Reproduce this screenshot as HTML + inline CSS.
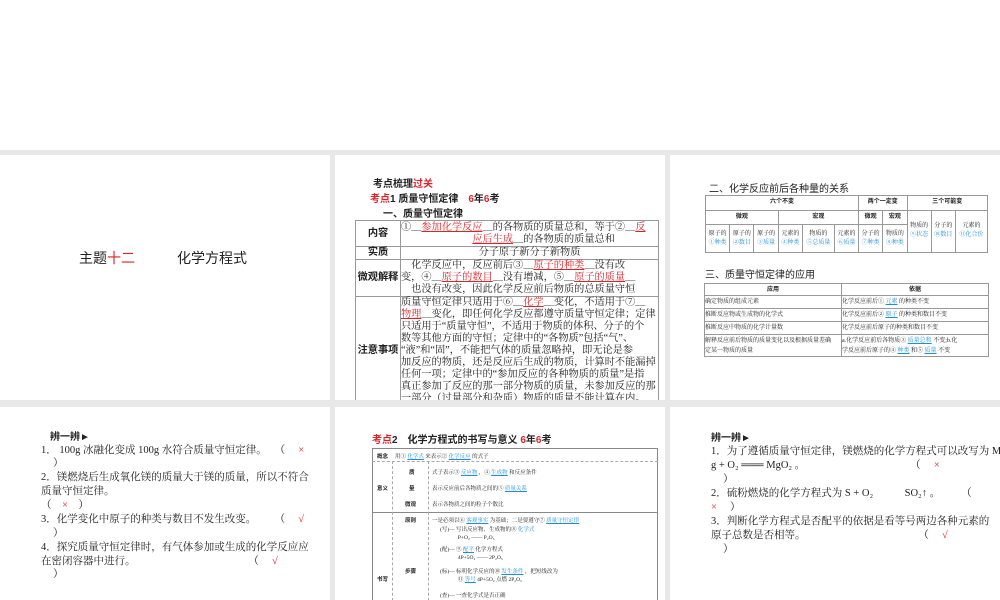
<!DOCTYPE html>
<html><head><meta charset="utf-8"><style>
*{margin:0;padding:0;box-sizing:border-box}
body{width:1000px;height:600px;background:#fff;position:relative;overflow:hidden;font-family:"Liberation Serif","Noto Serif CJK SC",serif;color:#222}
.bg{position:absolute;left:0;top:150px;width:1000px;height:450px;background:#e8e8e8}
.p{position:absolute;background:#fff;overflow:hidden}
.a{position:absolute;white-space:nowrap}
.r{color:#d9252a}.b{color:#1d8fd8}
.s{font-family:"Liberation Sans","Noto Sans CJK SC",sans-serif;font-weight:bold}
table{border-collapse:collapse;position:absolute}
td{border:1px solid #999;text-align:center;vertical-align:middle;white-space:nowrap;padding:0}
u{text-decoration:underline}
.t2 td{font-size:10.2px;line-height:12px;letter-spacing:0}
</style></head><body>
<div class="bg"></div>
<!-- panel 1 -->
<div class="p" style="left:0;top:155px;width:330px;height:245px">
<div class="a s" style="left:79px;top:93px;font-size:14px;font-weight:normal">主题<span class="r">十二</span>　　　化学方程式</div>
</div>
<!-- panel 2 -->
<div class="p" style="left:335px;top:155px;width:330px;height:245px;font-size:10.5px">
<div class="a s" style="left:38px;top:20px;font-size:10px">考点梳理<span class="r">过关</span></div>
<div class="a s" style="left:35px;top:35px;font-size:10px"><span class="r">考点</span>1 质量守恒定律　<span class="r">6</span>年<span class="r">6</span>考</div>
<div class="a s" style="left:48px;top:50px;font-size:10px">一、质量守恒定律</div>
<table class="t2" style="left:20px;top:65px;width:304px">
<tr><td class="s" style="width:45px;height:26px">内容</td><td style="text-align:left">①＿<u class="r">参加化学反应</u>＿的各物质的质量总和，等于②＿<u class="r">反</u><br>　　　　　　　<u class="r">应后生成</u>＿的各物质的质量总和</td></tr>
<tr><td class="s" style="height:12px">实质</td><td>分子原子新分子新物质</td></tr>
<tr><td class="s">微观解释</td><td style="text-align:left;height:37px">　化学反应中，反应前后③＿<u class="r">原子的种类</u>＿没有改<br>变，④＿<u class="r">原子的数目</u>＿没有增减，⑤＿<u class="r">原子的质量</u>＿<br>　也没有改变，因此化学反应前后物质的总质量守恒</td></tr>
<tr><td class="s">注意事项</td><td style="text-align:left">质量守恒定律只适用于⑥＿<u class="r">化学</u>＿变化，不适用于⑦＿<br><u class="r">物理</u>＿变化，即任何化学反应都遵守质量守恒定律；定律<br>只适用于“质量守恒”，不适用于物质的体积、分子的个<br>数等其他方面的守恒；定律中的“各物质”包括“气”、<br>“液”和“固”，不能把气体的质量忽略掉，即无论是参<br>加反应的物质，还是反应后生成的物质，计算时不能漏掉<br>任何一项；定律中的“参加反应的各种物质的质量”是指<br>真正参加了反应的那一部分物质的质量，未参加反应的那<br>一部分（过量部分和杂质）物质的质量不能计算在内。</td></tr>
</table>
</div>
<!-- panel 3 -->
<div class="p" style="left:670px;top:155px;width:330px;height:245px;font-size:6px">
<div class="a s" style="left:39px;top:25px;font-size:10px;font-weight:normal">二、化学反应前后各种量的关系</div>
<table style="left:35px;top:40px;width:283px;height:58px;line-height:9px">
<tr><td colspan="6" class="s">六个不变</td><td colspan="2" class="s">两个一定变</td><td colspan="3" class="s">三个可能变</td></tr>
<tr><td colspan="3" class="s">微观</td><td colspan="3" class="s">宏观</td><td class="s">微观</td><td class="s">宏观</td><td rowspan="2">物质的<br><span class="b">⑨状态</span></td><td rowspan="2">分子的<br><span class="b">⑩数目</span></td><td rowspan="2">元素的<br><span class="b">⑪化合价</span></td></tr>
<tr><td>原子的<br><span class="b">①种类</span></td><td>原子的<br><span class="b">②数目</span></td><td>原子的<br><span class="b">③质量</span></td><td>元素的<br><span class="b">④种类</span></td><td>物质的<br><span class="b">⑤总质量</span></td><td>元素的<br><span class="b">⑥质量</span></td><td>分子的<br><span class="b">⑦种类</span></td><td>物质的<br><span class="b">⑧种类</span></td></tr>
</table>
<div class="a s" style="left:35px;top:111px;font-size:10px;font-weight:normal">三、质量守恒定律的应用</div>
<table style="left:34px;top:128px;width:285px;line-height:10px">
<tr><td class="s" style="height:12px;width:137px">应用</td><td class="s">依据</td></tr>
<tr><td style="text-align:left;height:13px">确定物质的组成元素</td><td style="text-align:left">化学反应前后① <u class="b">元素</u> 的种类不变</td></tr>
<tr><td style="text-align:left;height:13px">推断反应物或生成物的化学式</td><td style="text-align:left">化学反应前后② <u class="b">原子</u> 的种类和数目不变</td></tr>
<tr><td style="text-align:left;height:13px">推断反应中物质的化学计量数</td><td style="text-align:left">化学反应前后原子的种类和数目不变</td></tr>
<tr><td style="text-align:left;height:22px">解释反应前后物质的质量变化以及根据质量差确<br>定某一物质的质量</td><td style="text-align:left">a.化学反应前后各物质③ <u class="b">质量总和</u> 不变;b.化<br>学反应前后原子的④ <u class="b">种类</u> 和⑤ <u class="b">质量</u> 不变</td></tr>
</table>
</div>
<!-- panel 4 -->
<div class="p" style="left:0;top:407px;width:330px;height:193px;font-size:10.5px;line-height:14px">
<div class="a s" style="left:50px;top:24px;font-size:10px">辨一辨►</div>
<div class="a" style="left:41px;top:37px">1． 100g 冰融化变成 100g 水符合质量守恒定律。　 （　 <span class="r">×</span></div>
<div class="a" style="left:53px;top:50px">）</div>
<div class="a" style="left:41px;top:64px">2．镁燃烧后生成氧化镁的质量大于镁的质量，所以不符合</div>
<div class="a" style="left:41px;top:78px">质量守恒定律。</div>
<div class="a" style="left:41px;top:92px">（　<span class="r">×</span>　）</div>
<div class="a" style="left:41px;top:106px">3．化学变化中原子的种类与数目不发生改变。　　 （　 <span class="r">√</span></div>
<div class="a" style="left:53px;top:120px">）</div>
<div class="a" style="left:41px;top:134px">4．探究质量守恒定律时，有气体参加或生成的化学反应应</div>
<div class="a" style="left:41px;top:148px">在密闭容器中进行。　　　　　　　　　　　 （　 <span class="r">√</span></div>
<div class="a" style="left:53px;top:161px">）</div>
</div>
<!-- panel 5 -->
<div class="p" style="left:335px;top:407px;width:330px;height:193px;font-size:5.5px">
<div class="a s" style="left:37px;top:24px;font-size:10px"><span class="r">考点</span>2　化学方程式的书写与意义 <span class="r">6</span>年<span class="r">6</span>考</div>
<div style="position:absolute;left:37px;top:41px;width:286px;height:160px;border:1px solid #888"></div>
<div class="a s" style="left:42px;top:45px">概念</div><div class="a" style="left:60px;top:45px">用① <u class="b">化学式</u> 来表示② <u class="b">化学反应</u> 的式子</div>
<div style="position:absolute;left:37px;top:54px;width:286px;border-top:1px dashed #aaa"></div>
<div class="a s" style="left:42px;top:77px">意义</div>
<div class="a s" style="left:74px;top:61px">质</div><div class="a" style="left:97px;top:61px">式子表示③ <u class="b">反应物</u> ，④ <u class="b">生成物</u> 和反应条件</div>
<div class="a s" style="left:74px;top:77px">量</div><div class="a" style="left:97px;top:77px">表示反应前后各物质之间的⑤ <u class="b">质量关系</u></div>
<div class="a s" style="left:70px;top:93px">微观</div><div class="a" style="left:97px;top:93px">表示各物质之间的粒子个数比</div>
<div style="position:absolute;left:37px;top:105px;width:286px;border-top:1px solid #888"></div>
<div style="position:absolute;left:57px;top:54px;height:150px;border-left:1px dashed #aaa"></div>
<div style="position:absolute;left:93px;top:54px;height:150px;border-left:1px dashed #aaa"></div>
<div class="a s" style="left:70px;top:109px">原则</div><div class="a" style="left:97px;top:109px">一是必须以⑥ <u class="b">客观事实</u> 为基础；二是要遵守⑦ <u class="b">质量守恒定律</u></div>
<div class="a s" style="left:70px;top:160px">步骤</div><div class="a s" style="left:42px;top:168px">书写</div>
<div class="a" style="left:105px;top:118px">(写)— 写出反应物、生成物的⑧ <span class="b">化学式</span><br>　　　 P+O₂ —— P₂O₅</div>
<div class="a" style="left:105px;top:138px">(配)— ⑨ <u class="b">配平</u> 化学方程式<br>　　　 4P+5O₂ —— 2P₂O₅</div>
<div class="a" style="left:105px;top:160px">(标)— 标明化学反应的⑩ <u class="b">发生条件</u> ，把短线改为<br>　　　 ⑪ <u class="b">等号</u> 4P+5O₂ 点燃 2P₂O₅</div>
<div class="a" style="left:105px;top:184px">(查)— 一查化学式是否正确<br>　　　 二查是否配平</div>
</div>
<!-- panel 6 -->
<div class="p" style="left:670px;top:407px;width:330px;height:193px;font-size:10.5px;line-height:14px">
<div class="a s" style="left:41px;top:25px;font-size:10px">辨一辨►</div>
<div class="a" style="left:41px;top:38px">1．为了遵循质量守恒定律，镁燃烧的化学方程式可以改写为 M</div>
<div class="a" style="left:41px;top:52px">g + O₂ ═══ MgO₂ 。　　　　　　　　　　　（　 <span class="r">×</span></div>
<div class="a" style="left:53px;top:66px">）</div>
<div class="a" style="left:41px;top:80px">2．硫粉燃烧的化学方程式为 S + O₂　　　SO₂↑ 。　　　（</div>
<div class="a" style="left:41px;top:94px"><span class="r">×</span>　 ）</div>
<div class="a" style="left:41px;top:108px">3．判断化学方程式是否配平的依据是看等号两边各种元素的</div>
<div class="a" style="left:41px;top:122px">原子总数是否相等。　　　　　　　　　　　 （　 <span class="r">√</span></div>
<div class="a" style="left:53px;top:136px">）</div>
</div>
</body></html>
